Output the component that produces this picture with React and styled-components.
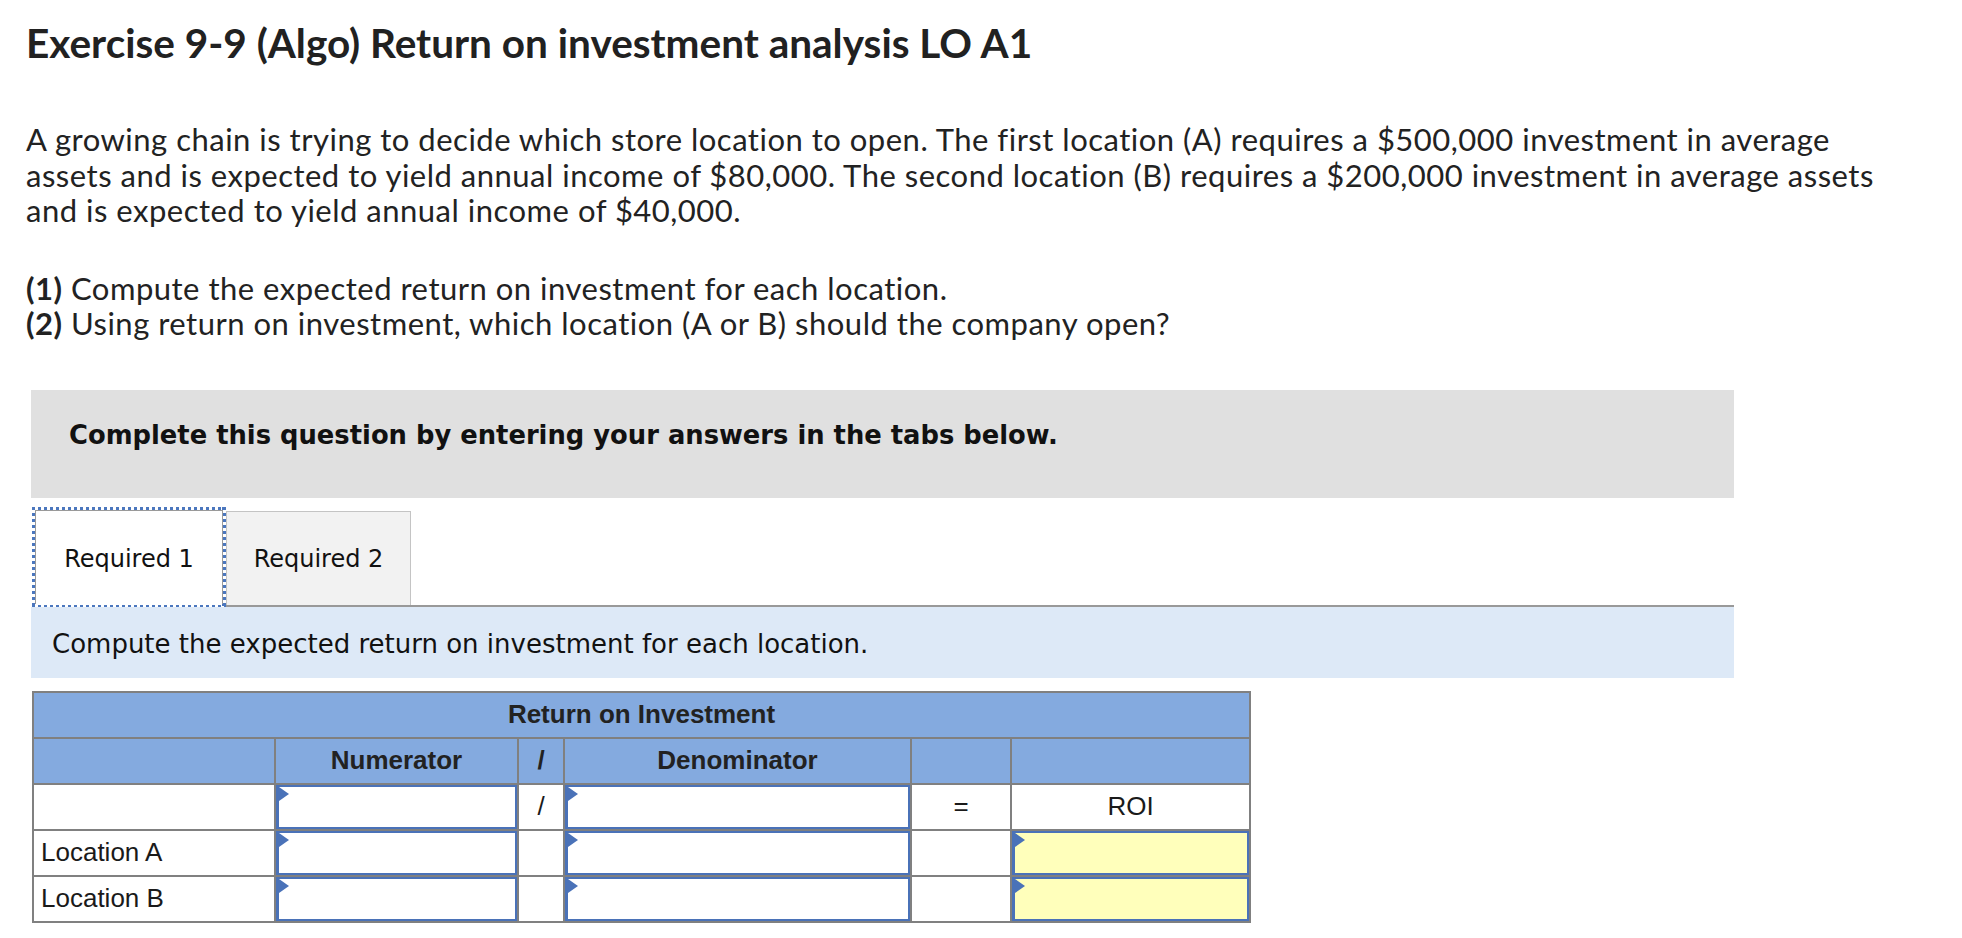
import React from "react";
import styled, { createGlobalStyle } from "styled-components";

const GlobalStyle = createGlobalStyle`
  body {
    margin: 0;
    background: #ffffff;
    color: #222222;
  }
`;

const Page = styled.div`
  padding: 21px 0 0 26px;
  width: 1900px;
  font-family: Lato, "Open Sans", sans-serif;
`;

const Title = styled.h1`
  margin: 0;
  font-size: 40.5px;
  line-height: 44px;
  font-weight: 700;
  color: #212121;
`;

const Text = styled.p`
  margin: ${(p) => p.$top}px 0 0;
  font-size: 31px;
  letter-spacing: 0.5px;
  line-height: 35.5px;
  white-space: nowrap;
  color: #222222;

  strong {
    font-weight: 700;
  }
`;

const Notice = styled.div`
  box-sizing: border-box;
  margin: 48px 0 0 5px;
  width: 1703px;
  height: 108px;
  padding: 30px 38px 0;
  background: #e0e0e0;
  font-family: "DejaVu Sans", Verdana, sans-serif;
  font-weight: 700;
  font-size: 25.8px;
  line-height: 30px;
  color: #111111;
`;

const TabBar = styled.div`
  display: flex;
  align-items: flex-end;
  margin: 9px 0 0 6px;
  width: 1702px;
`;

const dots = "#4b77be 0 3px, transparent 3px 6px";

const ActiveTab = styled.div`
  box-sizing: border-box;
  width: 194px;
  height: 100px;
  padding: 3px;
  background:
    repeating-linear-gradient(90deg, ${dots}) top / 100% 3px no-repeat,
    repeating-linear-gradient(90deg, ${dots}) bottom / 100% 2px no-repeat,
    repeating-linear-gradient(180deg, ${dots}) left / 3px 100% no-repeat,
    repeating-linear-gradient(180deg, ${dots}) right / 4px 100% no-repeat;
`;

const ActiveInner = styled.div`
  box-sizing: border-box;
  height: 100%;
  display: flex;
  align-items: center;
  justify-content: center;
  padding-top: 4px;
  background: #ffffff;
  border: 1px solid #9a9a9a;
  border-bottom: none;
`;

const TabRest = styled.div`
  flex: 1;
  display: flex;
  border-bottom: 2px solid #999999;
`;

const Tab = styled.div`
  box-sizing: border-box;
  width: 185px;
  height: 94px;
  display: flex;
  align-items: center;
  justify-content: center;
  padding-top: 2px;
  background: #f2f2f2;
  border: 1.5px solid #c4c4c4;
  border-bottom: none;
`;

const TabLabel = styled.span`
  font-family: "DejaVu Sans", Tahoma, sans-serif;
  font-size: 24px;
  color: #111111;
`;

const Instruction = styled.div`
  box-sizing: border-box;
  margin-left: 5px;
  width: 1703px;
  height: 71px;
  padding: 3px 21px 0;
  display: flex;
  align-items: center;
  background: #dde9f7;
  font-family: "DejaVu Sans", Tahoma, sans-serif;
  font-size: 26px;
  color: #111111;
`;

const Grid = styled.table`
  margin: 13px 0 0 6px;
  border-collapse: collapse;
  table-layout: fixed;
  width: 1217px;
  font-family: "Liberation Sans", Arial, sans-serif;
  font-size: 26px;
  color: #1a1a1a;
`;

const Head = styled.th`
  height: 44px;
  padding: 0;
  background: #84aadf;
  border: 2px solid #808080;
  font-weight: 700;
  text-align: center;
  color: #222222;
`;

const Cell = styled.td`
  height: 44px;
  padding: 0 ${(p) => (p.$label ? "7px" : "0")};
  border: 2px solid #808080;
  text-align: ${(p) => (p.$label ? "left" : "center")};
  background: #ffffff;
`;

const Entry = styled.div`
  position: relative;
  box-sizing: border-box;
  height: 44px;
  background: ${(p) => (p.$result ? "#ffffbb" : "#ffffff")};
  border: 2px solid #4a72b8;
  border-left-width: 3px;

  &::before {
    content: "";
    position: absolute;
    top: 0;
    left: 0;
    border-top: 7px solid transparent;
    border-bottom: 7px solid transparent;
    border-left: 10px solid #4a72b8;
  }
`;

const rows = ["Location A", "Location B"];

export default function App() {
  return (
    <>
      <GlobalStyle />
      <Page>
        <Title>Exercise 9-9 (Algo) Return on investment analysis LO A1</Title>
        <Text $top={57}>
          A growing chain is trying to decide which store location to open. The first location (A) requires a $500,000
          investment in average
          <br />
          assets and is expected to yield annual income of $80,000. The second location (B) requires a $200,000
          investment in average assets
          <br />
          and is expected to yield annual income of $40,000.
        </Text>
        <Text $top={42}>
          <strong>(1)</strong> Compute the expected return on investment for each location.
          <br />
          <strong>(2)</strong> Using return on investment, which location (A or B) should the company open?
        </Text>

        <Notice>Complete this question by entering your answers in the tabs below.</Notice>

        <TabBar>
          <ActiveTab>
            <ActiveInner>
              <TabLabel>Required 1</TabLabel>
            </ActiveInner>
          </ActiveTab>
          <TabRest>
            <Tab>
              <TabLabel>Required 2</TabLabel>
            </Tab>
          </TabRest>
        </TabBar>

        <Instruction>Compute the expected return on investment for each location.</Instruction>

        <Grid>
          <colgroup>
            <col style={{ width: 242 }} />
            <col style={{ width: 243 }} />
            <col style={{ width: 46 }} />
            <col style={{ width: 347 }} />
            <col style={{ width: 100 }} />
            <col style={{ width: 239 }} />
          </colgroup>
          <thead>
            <tr>
              <Head colSpan={6}>Return on Investment</Head>
            </tr>
            <tr>
              <Head />
              <Head>Numerator</Head>
              <Head>/</Head>
              <Head>Denominator</Head>
              <Head />
              <Head />
            </tr>
          </thead>
          <tbody>
            <tr>
              <Cell />
              <Cell>
                <Entry />
              </Cell>
              <Cell>/</Cell>
              <Cell>
                <Entry />
              </Cell>
              <Cell>=</Cell>
              <Cell>ROI</Cell>
            </tr>
            {rows.map((name) => (
              <tr key={name}>
                <Cell $label>{name}</Cell>
                <Cell>
                  <Entry />
                </Cell>
                <Cell />
                <Cell>
                  <Entry />
                </Cell>
                <Cell />
                <Cell>
                  <Entry $result />
                </Cell>
              </tr>
            ))}
          </tbody>
        </Grid>
      </Page>
    </>
  );
}
